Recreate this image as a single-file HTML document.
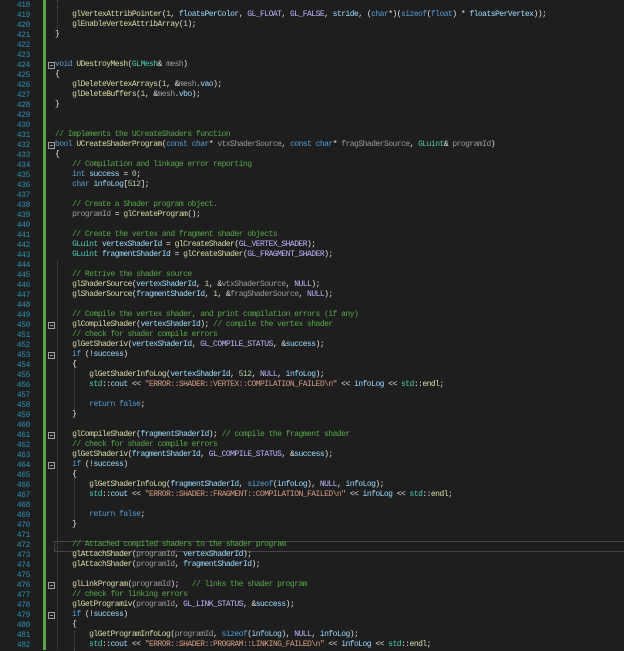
<!DOCTYPE html>
<html><head><meta charset="utf-8"><style>
html,body{margin:0;padding:0;background:#1e1e1e;width:624px;height:650px;overflow:hidden}
#ln{position:absolute;left:0;top:1px;width:30px;text-align:right;color:#2b91af;font:7.8px/10px "Liberation Mono",monospace;letter-spacing:-0.3px;white-space:pre}
#bar{position:absolute;left:43px;top:0;width:3px;height:650px;background:#57a64a}
#code{position:absolute;left:55px;top:0px;color:#e0e0e0;font:8px/10px "Liberation Mono",monospace;letter-spacing:-0.53px;white-space:pre;margin:0}
.f{color:#dcdcaa}.k{color:#569cd6}.c{color:#57a64a}.t{color:#4ec9b0}.p{color:#9a9a9a}.m{color:#beb7ff}.s{color:#d69d85}.v{color:#9cdcfe}.n{color:#b5cea8}
.box{position:absolute;left:48px;width:5px;height:5px;border:1px solid #a0a0a0;box-sizing:content-box}
.box:after{content:"";position:absolute;left:1px;top:2px;width:3px;height:1px;background:#a0a0a0}
.g{position:absolute;border-left:1px dotted #555;width:0}
#cur{position:absolute;left:54px;top:541px;width:580px;height:9px;border:1px solid #464646}
</style></head><body>
<div id="bar"></div>
<div id="cur"></div>
<div class="g" style="left:57px;top:0;height:30px"></div>
<div class="g" style="left:57px;top:261px;height:389px"></div>
<div class="g" style="left:74px;top:361px;height:50px"></div>
<div class="g" style="left:74px;top:471px;height:50px"></div>
<div class="g" style="left:74px;top:631px;height:20px"></div>
<div class="box" style="top:62px"></div>
<div class="box" style="top:142px"></div>
<div class="box" style="top:322px"></div>
<div class="box" style="top:352px"></div>
<div class="box" style="top:432px"></div>
<div class="box" style="top:462px"></div>
<div class="box" style="top:582px"></div>
<div class="box" style="top:612px"></div>
<div id="ln">418
419
420
421
422
423
424
425
426
427
428
429
430
431
432
433
434
435
436
437
438
439
440
441
442
443
444
445
446
447
448
449
450
451
452
453
454
455
456
457
458
459
460
461
462
463
464
465
466
467
468
469
470
471
472
473
474
475
476
477
478
479
480
481
482</div>
<pre id="code">

    <span class="f">glVertexAttribPointer</span>(<span class="n">1</span>, <span class="v">floatsPerColor</span>, <span class="m">GL_FLOAT</span>, <span class="m">GL_FALSE</span>, <span class="v">stride</span>, (<span class="k">char</span>*)(<span class="k">sizeof</span>(<span class="k">float</span>) * <span class="v">floatsPerVertex</span>));
    <span class="f">glEnableVertexAttribArray</span>(<span class="n">1</span>);
}


<span class="k">void</span> <span class="f">UDestroyMesh</span>(<span class="t">GLMesh</span>&amp; <span class="p">mesh</span>)
{
    <span class="f">glDeleteVertexArrays</span>(<span class="n">1</span>, &amp;<span class="p">mesh</span>.<span class="v">vao</span>);
    <span class="f">glDeleteBuffers</span>(<span class="n">1</span>, &amp;<span class="p">mesh</span>.<span class="v">vbo</span>);
}


<span class="c">// Implements the UCreateShaders function</span>
<span class="k">bool</span> <span class="f">UCreateShaderProgram</span>(<span class="k">const</span> <span class="k">char</span>* <span class="p">vtxShaderSource</span>, <span class="k">const</span> <span class="k">char</span>* <span class="p">fragShaderSource</span>, <span class="t">GLuint</span>&amp; <span class="p">programId</span>)
{
    <span class="c">// Compilation and linkage error reporting</span>
    <span class="k">int</span> <span class="v">success</span> = <span class="n">0</span>;
    <span class="k">char</span> <span class="v">infoLog</span>[<span class="n">512</span>];

    <span class="c">// Create a Shader program object.</span>
    <span class="p">programId</span> = <span class="f">glCreateProgram</span>();

    <span class="c">// Create the vertex and fragment shader objects</span>
    <span class="t">GLuint</span> <span class="v">vertexShaderId</span> = <span class="f">glCreateShader</span>(<span class="m">GL_VERTEX_SHADER</span>);
    <span class="t">GLuint</span> <span class="v">fragmentShaderId</span> = <span class="f">glCreateShader</span>(<span class="m">GL_FRAGMENT_SHADER</span>);

    <span class="c">// Retrive the shader source</span>
    <span class="f">glShaderSource</span>(<span class="v">vertexShaderId</span>, <span class="n">1</span>, &amp;<span class="p">vtxShaderSource</span>, <span class="m">NULL</span>);
    <span class="f">glShaderSource</span>(<span class="v">fragmentShaderId</span>, <span class="n">1</span>, &amp;<span class="p">fragShaderSource</span>, <span class="m">NULL</span>);

    <span class="c">// Compile the vertex shader, and print compilation errors (if any)</span>
    <span class="f">glCompileShader</span>(<span class="v">vertexShaderId</span>); <span class="c">// compile the vertex shader</span>
    <span class="c">// check for shader compile errors</span>
    <span class="f">glGetShaderiv</span>(<span class="v">vertexShaderId</span>, <span class="m">GL_COMPILE_STATUS</span>, &amp;<span class="v">success</span>);
    <span class="k">if</span> (!<span class="v">success</span>)
    {
        <span class="f">glGetShaderInfoLog</span>(<span class="v">vertexShaderId</span>, <span class="n">512</span>, <span class="m">NULL</span>, <span class="v">infoLog</span>);
        <span class="t">std</span>::<span class="v">cout</span> &lt;&lt; <span class="s">"ERROR::SHADER::VERTEX::COMPILATION_FAILED\n"</span> &lt;&lt; <span class="v">infoLog</span> &lt;&lt; <span class="t">std</span>::<span class="f">endl</span>;

        <span class="k">return</span> <span class="k">false</span>;
    }

    <span class="f">glCompileShader</span>(<span class="v">fragmentShaderId</span>); <span class="c">// compile the fragment shader</span>
    <span class="c">// check for shader compile errors</span>
    <span class="f">glGetShaderiv</span>(<span class="v">fragmentShaderId</span>, <span class="m">GL_COMPILE_STATUS</span>, &amp;<span class="v">success</span>);
    <span class="k">if</span> (!<span class="v">success</span>)
    {
        <span class="f">glGetShaderInfoLog</span>(<span class="v">fragmentShaderId</span>, <span class="k">sizeof</span>(<span class="v">infoLog</span>), <span class="m">NULL</span>, <span class="v">infoLog</span>);
        <span class="t">std</span>::<span class="v">cout</span> &lt;&lt; <span class="s">"ERROR::SHADER::FRAGMENT::COMPILATION_FAILED\n"</span> &lt;&lt; <span class="v">infoLog</span> &lt;&lt; <span class="t">std</span>::<span class="f">endl</span>;

        <span class="k">return</span> <span class="k">false</span>;
    }

    <span class="c">// Attached compiled shaders to the shader program</span>
    <span class="f">glAttachShader</span>(<span class="p">programId</span>, <span class="v">vertexShaderId</span>);
    <span class="f">glAttachShader</span>(<span class="p">programId</span>, <span class="v">fragmentShaderId</span>);

    <span class="f">glLinkProgram</span>(<span class="p">programId</span>);   <span class="c">// links the shader program</span>
    <span class="c">// check for linking errors</span>
    <span class="f">glGetProgramiv</span>(<span class="p">programId</span>, <span class="m">GL_LINK_STATUS</span>, &amp;<span class="v">success</span>);
    <span class="k">if</span> (!<span class="v">success</span>)
    {
        <span class="f">glGetProgramInfoLog</span>(<span class="p">programId</span>, <span class="k">sizeof</span>(<span class="v">infoLog</span>), <span class="m">NULL</span>, <span class="v">infoLog</span>);
        <span class="t">std</span>::<span class="v">cout</span> &lt;&lt; <span class="s">"ERROR::SHADER::PROGRAM::LINKING_FAILED\n"</span> &lt;&lt; <span class="v">infoLog</span> &lt;&lt; <span class="t">std</span>::<span class="f">endl</span>;</pre>
</body></html>
